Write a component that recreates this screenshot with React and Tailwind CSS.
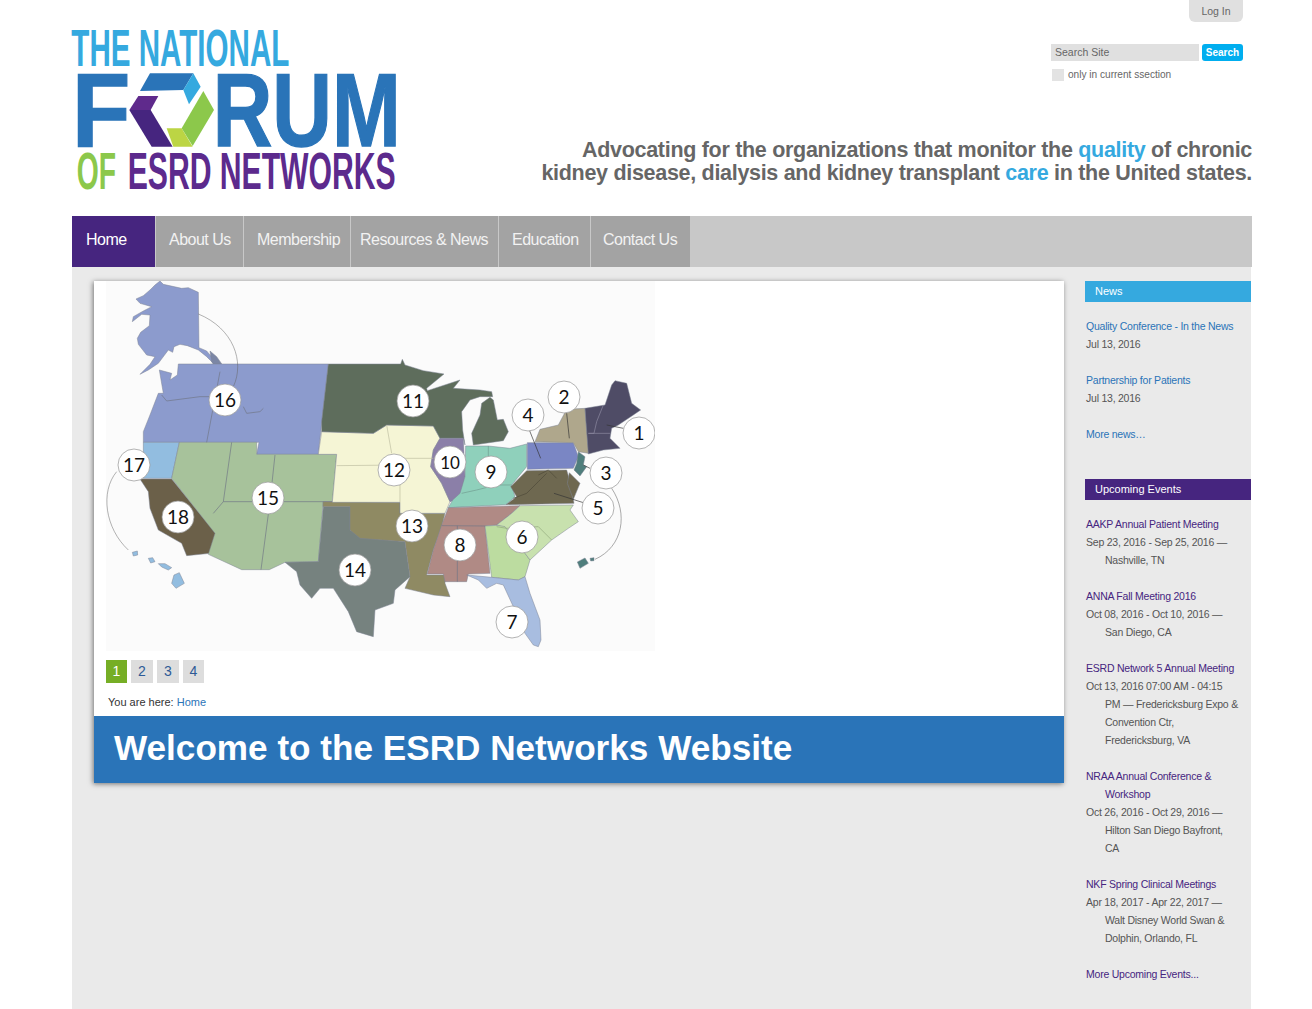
import React from 'react';

const navItems = [
    { label: 'Home', width: 'w-[83px]', pad: 'pl-[14px]', active: true },
    { label: 'About Us', width: 'w-[87px]', pad: 'pl-[13px]' },
    { label: 'Membership', width: 'w-[106px]', pad: 'pl-[13px]' },
    { label: 'Resources & News', width: 'w-[147px]', pad: 'pl-[9px]' },
    { label: 'Education', width: 'w-[91px]', pad: 'pl-[13px]' },
    { label: 'Contact Us', width: 'w-[99px]', pad: 'pl-[12px]' },
];

const events = [
    { title: ['AAKP Annual Patient Meeting'], info: ['Sep 23, 2016 - Sep 25, 2016 —', 'Nashville, TN'] },
    { title: ['ANNA Fall Meeting 2016'], info: ['Oct 08, 2016 - Oct 10, 2016 —', 'San Diego, CA'] },
    { title: ['ESRD Network 5 Annual Meeting'], info: ['Oct 13, 2016 07:00 AM - 04:15', 'PM — Fredericksburg Expo &', 'Convention Ctr,', 'Fredericksburg, VA'] },
    { title: ['NRAA Annual Conference &', 'Workshop'], info: ['Oct 26, 2016 - Oct 29, 2016 —', 'Hilton San Diego Bayfront,', 'CA'] },
    { title: ['NKF Spring Clinical Meetings'], info: ['Apr 18, 2017 - Apr 22, 2017 —', 'Walt Disney World Swan &', 'Dolphin, Orlando, FL'] },
];

// coordinates below are taken from 3x crops, hence the two scaled groups
const westRegions = [
    { fill: '#8c9bcd', points: '180,18 190,28 245,40 265,38 295,52 297,218 320,228 345,258 375,290 360,295 340,265 320,245 295,225 262,212 240,208 222,215 218,232 205,225 175,265 145,285 120,298 150,268 165,245 140,240 115,208 112,190 122,172 148,152 150,120 125,118 97,140 100,125 130,108 155,95 120,85 108,72 130,62 150,45 165,30' },
    { fill: '#7b86a5', points: '330,228 350,245 378,285 358,295 335,260' },
    { fill: '#8c9bcd', points: '235,267 685,267 670,398 655,538 470,538 477,502 130,502 130,470 150,420 175,355 190,355 178,285 215,295 210,315 232,300' },
    { fill: '#92bde0', points: '130,502 238,502 215,610 130,610' },
    { fill: '#6b6049', points: '120,612 215,612 347,775 330,835 260,842 245,805 175,765 150,700 145,650' },
    { fill: '#a7c29b', points: '238,502 470,502 470,538 710,538 697,680 670,680 655,860 555,862 508,884 425,884 325,838 345,775 215,610' },
    { fill: '#76827f', points: '670,695 750,695 750,765 810,790 915,800 930,905 885,945 880,985 825,1005 820,1085 770,1070 745,1010 700,940 660,940 635,970 600,930 590,890 555,862 655,860' },
    { fill: '#92bde0', points: '222,900 238,893 253,925 228,940 215,925' },
    { fill: '#92bde0', points: '145,850 158,848 165,860 152,864' },
    { fill: '#92bde0', points: '175,866 195,866 215,878 205,885 185,876' },
    { fill: '#92bde0', points: '97,832 112,828 113,840 100,843' },
];

const westLines = [
    '185,360 200,378 300,365 335,365',
    '360,290 320,502',
    '430,395 440,415 480,410 490,400',
    '395,502 370,680 340,715',
    '525,540 510,680 483,884',
    '370,680 697,680',
];

const eastRegions = [
    { fill: '#8f8a63', points: '-141,455 90,457 90,490 225,490 215,530 190,600 170,675 225,675 225,700 240,740 190,735 105,715 120,680 105,575 -30,565 -60,540 -60,470 -141,470' },
    { fill: '#f5f5d5', points: '-145,245 10,250 50,225 190,228 210,265 190,300 182,350 215,400 240,455 225,490 90,490 90,457 -113,457 -100,313 -155,313' },
    { fill: '#5e6d5c', points: '-125,42 92,42 97,28 105,45 160,62 222,72 170,115 172,122 270,90 250,115 330,120 365,125 368,140 330,140 300,150 275,185 278,240 285,285 280,265 210,265 190,228 50,225 10,250 -145,245 -145,215' },
    { fill: '#5e6d5c', points: '310,285 305,250 330,195 335,160 360,142 370,150 382,210 400,208 415,245 400,272' },
    { fill: '#8b7fa8', points: '210,265 280,265 285,380 275,430 255,450 240,455 215,400 182,350 190,300' },
    { fill: '#8fd0bb', points: '287,288 355,288 420,295 470,282 470,350 425,405 435,440 408,464 235,473 248,450 270,430 285,380' },
    { fill: '#b08a85', points: '235,473 450,467 425,490 380,525 345,528 360,670 295,672 290,695 225,695 220,672 172,672 190,600 215,525' },
    { fill: '#bcdca0', points: '345,528 405,525 480,630 465,680 445,690 365,682' },
    { fill: '#c8e1ae', points: '450,467 610,465 600,480 625,515 595,535 545,570 480,630 405,530 380,525 425,490' },
    { fill: '#a8bde0', points: '290,675 365,682 445,690 465,680 480,730 510,810 513,870 505,890 490,885 465,850 430,770 400,705 380,700 350,715 325,690' },
    { fill: '#6e6850', points: '408,464 440,440 422,410 470,362 590,360 600,395 612,460' },
    { fill: '#6e6850', points: '598,368 630,400 610,448 592,400' },
    { fill: '#7a86c4', points: '472,278 610,278 625,320 610,355 472,358' },
    { fill: '#4f7e7c', points: '625,305 645,320 640,345 650,350 630,378 612,360 620,340' },
    { fill: '#afa78c', points: '495,275 510,238 565,225 590,178 645,175 655,295 655,310 625,305 610,278' },
    { fill: '#4f4c66', points: '645,175 705,165 725,105 735,92 770,100 785,160 812,180 790,195 745,225 725,235 720,265 750,295 700,300 655,312' },
    { fill: '#4f7e7c', points: '622,636 645,624 655,640 630,655' },
    { fill: '#4f7e7c', points: '660,625 672,623 672,632 662,633' },
];

const eastLines = [
    { points: '355,288 355,320', stroke: '#6f9c90' },
    { points: '215,527 345,528', stroke: '#6f7585' },
    { points: '262,527 262,695', stroke: '#6f7585' },
    { points: '50,225 65,310', stroke: '#bdbda0' },
    { points: '-100,347 90,345 90,457', stroke: '#bdbda0' },
    { points: '70,325 190,325', stroke: '#bdbda0' },
    { points: '700,165 680,215 672,250 655,250', stroke: '#8f8da3' },
    { points: '655,250 720,250', stroke: '#8f8da3' },
    { points: '505,375 535,360 560,385', stroke: '#4d4838' },
    { points: '430,445 470,430 505,395 530,370', stroke: '#4d4838' },
    { points: '380,530 410,535 505,530 545,570', stroke: '#8fa87c' },
    { points: '275,430 320,420 380,405 425,405', stroke: '#6f9c90' },
];

const leaders = [
    '478,240 512,325',
    '590,190 598,265',
    '760,235 710,225',
    '640,458 552,430',
    '660,355 640,345',
];

const pins = [
    { n: 16, x: 225, y: 400 },
    { n: 17, x: 134, y: 465 },
    { n: 18, x: 178, y: 517 },
    { n: 15, x: 268, y: 498 },
    { n: 14, x: 355, y: 570 },
    { n: 12, x: 394, y: 470 },
    { n: 11, x: 413, y: 401 },
    { n: 4, x: 528, y: 415 },
    { n: 2, x: 564, y: 397 },
    { n: 1, x: 639, y: 433 },
    { n: 10, x: 450, y: 462 },
    { n: 9, x: 491, y: 472 },
    { n: 13, x: 412, y: 526 },
    { n: 8, x: 460, y: 545 },
    { n: 6, x: 522, y: 537 },
    { n: 3, x: 606, y: 473 },
    { n: 5, x: 598, y: 508 },
    { n: 7, x: 512, y: 622 },
];

function Logo() {
    const font = { fontFamily: '"Liberation Sans", Arial, sans-serif', fontWeight: 700 };
    return (
        <svg viewBox="60 15 350 190" className="block w-[350px] h-[190px] ml-[-12px] mt-[15px]">
            <g transform="translate(60 15) scale(0.33333)">
                <text x="34" y="152" fontSize="153" fill="#35a9df" style={font} textLength="654" lengthAdjust="spacingAndGlyphs">THE NATIONAL</text>
                <text x="36" y="394" fontSize="312" fill="#2a74b8" stroke="#2a74b8" strokeWidth="4" style={font} textLength="175" lengthAdjust="spacingAndGlyphs">F</text>
                <text x="458" y="394" fontSize="312" fill="#2a74b8" stroke="#2a74b8" strokeWidth="4" style={font} textLength="564" lengthAdjust="spacingAndGlyphs">RUM</text>
                <polygon points="270,175 400,175 370,225 240,228" fill="#2a74b8" />
                <polygon points="400,175 422,215 387,268 370,225" fill="#35a9df" />
                <polygon points="235,243 295,243 272,285 208,285" fill="#5f2a8c" />
                <polygon points="208,285 272,285 338,395 275,395" fill="#46257f" />
                <polygon points="320,340 365,340 398,395 340,395" fill="#bcd544" />
                <polygon points="430,228 462,285 398,393 365,340" fill="#8cc84b" />
                <text x="50" y="522" fontSize="153" fill="#8cc84b" style={font} textLength="118" lengthAdjust="spacingAndGlyphs">OF</text>
                <text x="203" y="522" fontSize="153" fill="#5c2a8d" style={font} textLength="804" lengthAdjust="spacingAndGlyphs">ESRD NETWORKS</text>
            </g>
        </svg>
    );
}

function RegionMap() {
    return (
        <svg viewBox="106 281 549 370" className="block w-[549px] h-[370px] ml-[12px] bg-[#fbfbfb]">
            <g transform="translate(100 275) scale(0.33333)">
                {westRegions.map((r, i) => <polygon key={i} points={r.points} fill={r.fill} stroke="#7d8494" strokeWidth="1.5" strokeLinejoin="round" />)}
                {westLines.map((l, i) => <polyline key={i} points={l} fill="none" stroke="#6f7585" strokeWidth="2" />)}
                <path d="M295 117 C400 160 435 260 400 335" fill="none" stroke="#666" strokeWidth="1.5" />
                <path d="M50 590 C0 650 15 760 85 825" fill="none" stroke="#666" strokeWidth="1.5" />
            </g>
            <g transform="translate(370 350) scale(0.33333)">
                {eastRegions.map((r, i) => <polygon key={i} points={r.points} fill={r.fill} stroke="#7d8494" strokeWidth="1.5" strokeLinejoin="round" />)}
                {eastLines.map((l, i) => <polyline key={i} points={l.points} fill="none" stroke={l.stroke} strokeWidth="2" />)}
                {leaders.map((l, i) => <polyline key={i} points={l} fill="none" stroke="#333" strokeWidth="2" />)}
                <path d="M725 415 C775 490 760 590 675 628" fill="none" stroke="#555" strokeWidth="1.5" />
            </g>
            {pins.map(p => (
                <g key={p.n}>
                    <circle cx={p.x} cy={p.y} r="16" fill="#fff" stroke="#999" strokeWidth="0.75" />
                    <text x={p.x} y={p.y + 6.5} textAnchor="middle" fontSize={p.n === 10 ? 17 : 19} fill="#111" style={{ fontFamily: 'Lato, sans-serif' }}>{p.n}</text>
                </g>
            ))}
        </svg>
    );
}

function SideHeading({ color, children }) {
    return <h3 className={`h-[21px] pl-[10px] text-[11px] leading-[21px] tracking-normal text-white ${color}`}>{children}</h3>;
}

export default function App() {
    return (
        <div className="w-[1312px] h-[1009px] overflow-hidden bg-white pl-[72px] font-['Liberation_Sans',Arial,sans-serif]">
            <div className="w-[1180px]">
                <header className="relative flex h-[216px] justify-between">
                    <Logo />
                    <div className="flex flex-col items-end">
                        <div className="w-[192px] mr-[9px] flex flex-col">
                            <button className="self-end w-[54px] h-[22px] rounded-b-md bg-[#e0e0e0] text-[10.5px] leading-[22px] text-[#666]">Log In</button>
                            <div className="mt-[22px] flex gap-[3px]">
                                <div className="w-[148px] h-[17px] bg-[#e0e0e0] pl-[4px] text-[10.5px] leading-[17px] text-[#666]">Search Site</div>
                                <button className="w-[41px] h-[17px] rounded-[3px] bg-[#00aeef] text-[10px] leading-[17px] font-bold text-white">Search</button>
                            </div>
                            <label className="mt-[8px] flex items-center gap-[4px] text-[10.1px] leading-[12px] text-[#666]">
                                <span className="ml-[1px] w-[12px] h-[12px] bg-[#e3e3e3]"></span>
                                only in current ssection
                            </label>
                        </div>
                        <p className="mt-[58px] text-right text-[21.5px] leading-[23px] tracking-[-0.3px] font-bold text-[#666] whitespace-nowrap">
                            Advocating for the organizations that monitor the <span className="text-[#35a9df]">quality</span> of chronic<br />
                            kidney disease, dialysis and kidney transplant <span className="text-[#35a9df]">care</span> in the United states.
                        </p>
                    </div>
                </header>

                <nav className="flex h-[51px] bg-[#c8c8c8]">
                    {navItems.map(item => (
                        <a key={item.label} className={`${item.width} ${item.pad} block mr-[1px] text-[16px] leading-[47px] tracking-[-0.5px] whitespace-nowrap ${item.active ? 'bg-[#46257f] text-white' : 'bg-[#a3a3a3] text-[#f2f2f2]'}`}>{item.label}</a>
                    ))}
                </nav>

                <main className="flex h-[742px] w-[1179px] bg-[#eaeaea] pt-[14px] pl-[22px]">
                    <div className="w-[970px] h-[502px] bg-white shadow-[-1px_1px_5px_rgba(0,0,0,0.5)]">
                        <RegionMap />
                        <div className="mt-[9px] ml-[12px] flex gap-[4px] text-[14px] leading-[23px] text-center text-[#2d5a96]">
                            <span className="w-[21px] h-[23px] bg-[#76ae25] text-white">1</span>
                            <span className="w-[22px] h-[23px] bg-[#dddddd]">2</span>
                            <span className="w-[22px] h-[23px] bg-[#dddddd]">3</span>
                            <span className="w-[21px] h-[23px] bg-[#dddddd]">4</span>
                        </div>
                        <p className="mt-[11px] ml-[14px] h-[22px] text-[11px] leading-[16px] text-[#333]">You are here: <a className="text-[#2a74b8]">Home</a></p>
                        <h1 className="h-[67px] bg-[#2a74b8] pl-[20px] text-[35.15px] leading-[63px] font-bold text-white whitespace-nowrap">Welcome to the ESRD Networks Website</h1>
                    </div>

                    <aside className="ml-[21px] w-[166px] text-[10.5px] leading-[18px] tracking-[-0.23px] text-[#555]">
                        <SideHeading color="bg-[#35a9df]">News</SideHeading>
                        <div className="mt-[15px] pl-[1px]">
                            <a className="block text-[#2a74b8]">Quality Conference - In the News</a>
                            <p className="mb-[18px]">Jul 13, 2016</p>
                            <a className="block text-[#2a74b8]">Partnership for Patients</a>
                            <p className="mb-[18px]">Jul 13, 2016</p>
                            <a className="block text-[#2a74b8]">More news…</a>
                        </div>
                        <div className="mt-[36px]">
                            <SideHeading color="bg-[#46257f]">Upcoming Events</SideHeading>
                        </div>
                        <div className="mt-[15px] pl-[1px]">
                            {events.map(ev => (
                                <div key={ev.title[0]} className="mb-[18px] pl-[19px] indent-[-19px]">
                                    <a className="block text-[#46257f]">
                                        {ev.title.map((line, i) => <React.Fragment key={i}>{i > 0 && <br />}{line}</React.Fragment>)}
                                    </a>
                                    <p>
                                        {ev.info.map((line, i) => <React.Fragment key={i}>{i > 0 && <br />}{line}</React.Fragment>)}
                                    </p>
                                </div>
                            ))}
                            <a className="block text-[#46257f]">More Upcoming Events...</a>
                        </div>
                    </aside>
                </main>
            </div>
        </div>
    );
}
